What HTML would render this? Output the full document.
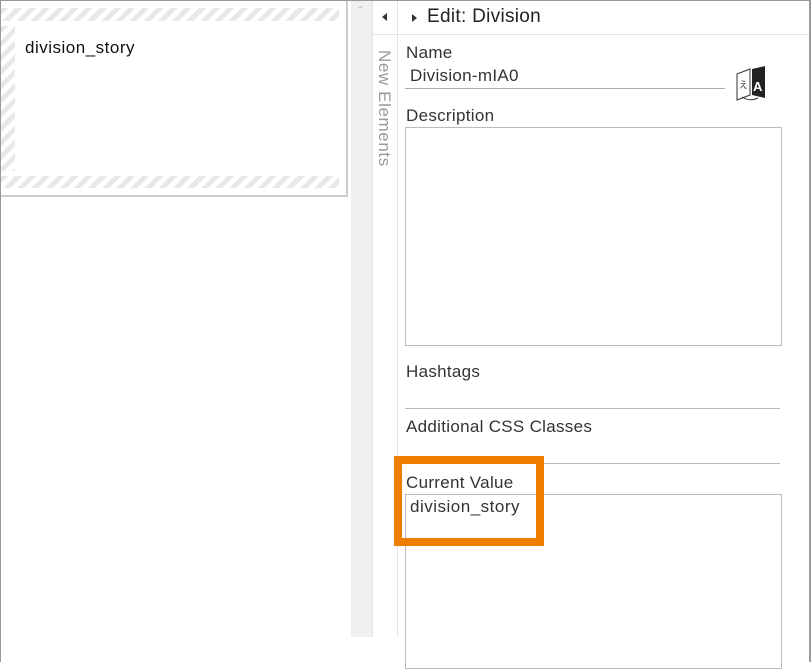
<!DOCTYPE html>
<html><head><style>
*{margin:0;padding:0;box-sizing:border-box}
body{width:811px;height:662px;background:#fff;position:relative;overflow:hidden;font-family:"Liberation Sans",sans-serif;color:#333;letter-spacing:0.3px}
.abs{position:absolute}
.hatch{background:repeating-linear-gradient(135deg,#e8e8e8 0 5px,#fff 5px 10px)}
.lbl{font-size:17px;color:#333;position:absolute}
</style></head><body>
<div class="abs" style="left:0;top:0;width:811px;height:1px;background:#999"></div>
<div class="abs" style="left:0;top:0;width:1px;height:662px;background:#999"></div>
<div class="abs" style="left:809px;top:0;width:2px;height:662px;background:#999"></div>
<div class="abs" style="left:1px;top:1px;width:347px;height:196px;border-right:2px solid #ccc;border-bottom:2px solid #ccc;background:#fff"></div>
<div class="abs hatch" style="left:1px;top:8px;width:338px;height:13px"></div>
<div class="abs hatch" style="left:1px;top:176px;width:338px;height:12px"></div>
<div class="abs hatch" style="left:1px;top:26px;width:14px;height:145px"></div>
<div class="abs" style="left:25px;top:38px;font-size:17px;color:#111;letter-spacing:0.5px">division_story</div>
<div class="abs" style="left:351px;top:1px;width:21px;height:636px;background:#f0f0f0"></div>
<div class="abs" style="left:356px;top:4px;font-size:11px;color:#bbb">&#8963;</div>
<div class="abs" style="left:372px;top:1px;width:26px;height:636px;border-left:1px solid #e4e4e4;border-right:1px solid #e4e4e4;background:#fff"></div>
<div class="abs" style="left:372px;top:34px;width:26px;height:1px;background:#e4e4e4"></div>
<div class="abs" style="left:382px;top:13px;width:0;height:0;border-top:4px solid transparent;border-bottom:4px solid transparent;border-right:5px solid #333"></div>
<div class="abs" style="left:374px;top:50px;writing-mode:vertical-rl;font-size:17px;color:#999;letter-spacing:0.6px">New Elements</div>
<div class="abs" style="left:398px;top:34px;width:411px;height:1px;background:#e4e4e4"></div>
<div class="abs" style="left:412px;top:14px;width:0;height:0;border-top:4px solid transparent;border-bottom:4px solid transparent;border-left:5px solid #333"></div>
<div class="abs" style="left:427px;top:6px;font-size:19px;color:#222">Edit: Division</div>
<div class="lbl" style="left:406px;top:43px">Name</div>
<div class="abs" style="left:410px;top:66px;font-size:17px;color:#333">Division-mIA0</div>
<div class="abs" style="left:405px;top:88px;width:320px;height:1px;background:#aaa"></div>
<svg class="abs" style="left:734px;top:64px" width="36" height="38" viewBox="0 0 36 38">
<path d="M3 10 L16 5 L16 31 L3 36 Z" fill="#fff" stroke="#333" stroke-width="1"/>
<path d="M18 5 L31 2 L31 34 L18 31 Z" fill="#222"/>
<text x="19" y="27" font-family="Liberation Sans" font-weight="bold" font-size="13" fill="#fff">A</text>
<text x="5" y="24" font-family="Noto Sans CJK JP" font-size="9" fill="#333">え</text>
<path d="M8 33 Q16 38 24 34" fill="none" stroke="#333" stroke-width="1"/>
</svg>
<div class="lbl" style="left:406px;top:106px">Description</div>
<div class="abs" style="left:405px;top:127px;width:377px;height:219px;border:1px solid #bbb"></div>
<div class="lbl" style="left:406px;top:362px">Hashtags</div>
<div class="abs" style="left:405px;top:408px;width:375px;height:1px;background:#bbb"></div>
<div class="lbl" style="left:406px;top:417px">Additional CSS Classes</div>
<div class="abs" style="left:405px;top:463px;width:375px;height:1px;background:#bbb"></div>
<div class="lbl" style="left:406px;top:473px">Current Value</div>
<div class="abs" style="left:405px;top:494px;width:377px;height:175px;border:1px solid #bbb"></div>
<div class="abs" style="left:410px;top:497px;font-size:17px;color:#333;letter-spacing:0.5px">division_story</div>
<div class="abs" style="left:394px;top:456px;width:150px;height:90px;border:8px solid #f07c00"></div>
</body></html>
